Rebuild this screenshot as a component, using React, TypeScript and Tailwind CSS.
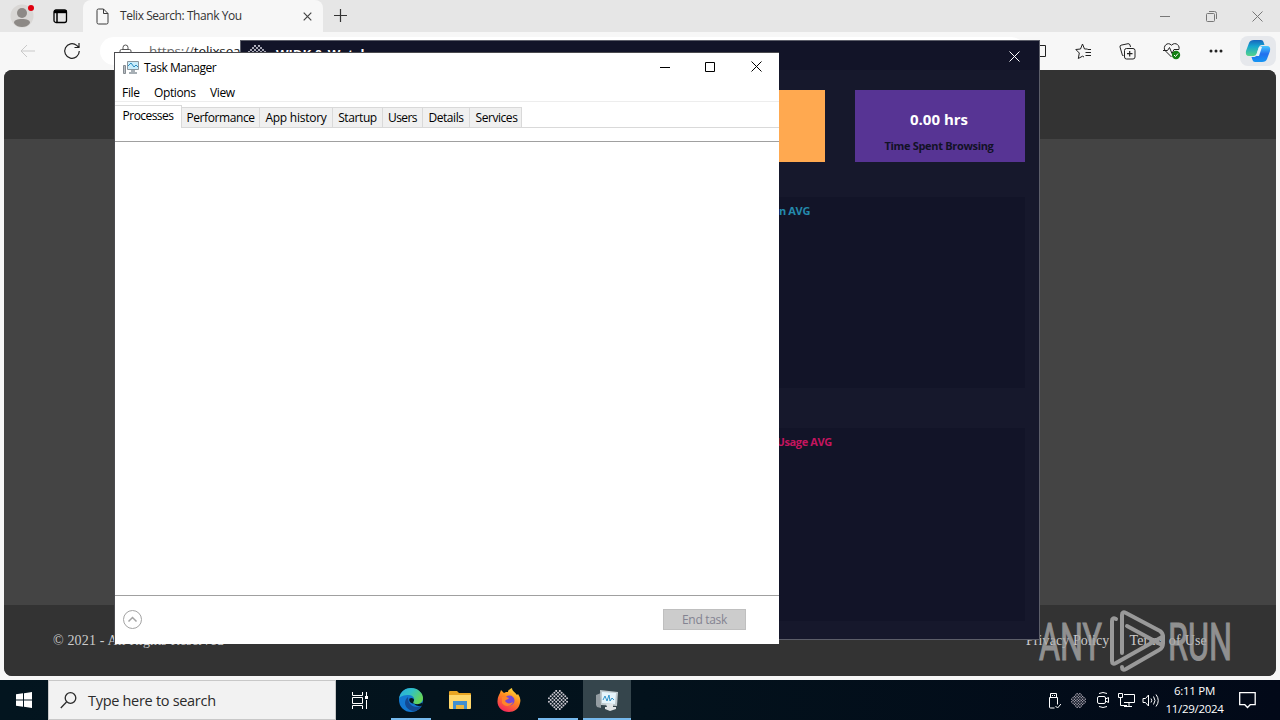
import type { ReactNode } from "react";

const tabs = [
    { label: "Performance", box: "w-[78px]", text: "tracking-[-0.4px]" },
    { label: "App history", box: "w-[73px]", text: "tracking-[-0.25px]" },
    { label: "Startup", box: "w-[50px]", text: "tracking-[-0.4px]" },
    { label: "Users", box: "w-[40px]", text: "tracking-[-0.6px]" },
    { label: "Details", box: "w-[47px]", text: "tracking-[-0.45px]" },
    { label: "Services", box: "w-[52px] pl-0.5", text: "tracking-[-0.45px]" },
];

function Svg({ w, h, className = "", children }: { w: number; h: number; className?: string; children: ReactNode }) {
    return (
        <svg width={w} height={h} viewBox={`0 0 ${w} ${h}`} fill="none" stroke="currentColor" className={`shrink-0 ${className}`}>
            {children}
        </svg>
    );
}

// round badge made of a dot matrix, used by the app window and in the taskbar
function DotBadge({ size, color }: { size: number; color: string }) {
    const dots: ReactNode[] = [];
    for (let y = 0; y < 11; y++) {
        for (let x = 0; x < 11; x++) {
            if ((x + y) % 2 === 0 && Math.hypot(x - 5, y - 5) < 5.6) {
                dots.push(<circle key={`${x}-${y}`} cx={x * 2 + 1} cy={y * 2 + 1} r="1.1" />);
            }
        }
    }
    return (
        <svg width={size} height={size} viewBox="0 0 22 22" fill={color} className="shrink-0">
            {dots}
        </svg>
    );
}

function MonitorIcon() {
    return (
        <Svg w={16} h={15}>
            <path d="M.5 5.500v8h2v-8z" fill="#b9bec3" stroke="#858b91" />
            <path d="M4.500 1.500h11v8h-11z" fill="#c9ecfa" stroke="#8b969e" />
            <path d="M5 6l3-3 3 4 2-2 2 2" stroke="#2c8cc0" />
            <path d="M8 10h4v2h2v2H6v-2h2z" fill="#a7afb5" stroke="none" />
        </Svg>
    );
}

function BrowserTabs() {
    return (
        <div className="flex h-8 bg-[#e6e6e6]">
            <div className="flex w-[83px] items-center pl-2.5">
                <Svg w={26} h={26}>
                    <circle cx="12" cy="13" r="11.500" fill="#d9d7d5" stroke="none" />
                    <circle cx="12" cy="10" r="5" fill="#8d8986" stroke="none" />
                    <path d="M4 20c0-3 3-4 8-4s8 1 8 4c-2 3-5 4-8 4s-6-1-8-4z" fill="#8d8986" stroke="none" />
                    <circle cx="21" cy="5" r="3" fill="#e0000f" stroke="none" />
                </Svg>
                <Svg w={15} h={15} className="ml-[17px] text-black">
                    <rect x="1" y="1" width="12.500" height="12.500" rx="2" strokeWidth="1.300" />
                    <path d="M4 3v10" strokeWidth="1.500" />
                    <path d="M1 2.700h12.500" strokeWidth="3" />
                </Svg>
            </div>
            <div className="flex w-60 items-center rounded-t-lg bg-[#f7f7f7] pl-[13px]">
                <Svg w={13} h={17} className="text-[#3b3b3b]">
                    <path d="M7.500 1h-5Q1 1 1 2.500v12Q1 16 2.500 16h8q1.500 0 1.500-1.500v-9zM7.500 1v4.500H12" />
                </Svg>
                <span className="ml-[11px] w-[183px] text-xs tracking-[-0.44px] text-[#333]">Telix Search: Thank You</span>
                <Svg w={9} h={9} className="text-[#444]">
                    <path d="M.7.7l7.600 7.600M8.300.7L.7 8.300" strokeWidth="1.200" />
                </Svg>
            </div>
            <Svg w={15} h={15} className="mt-2 ml-2.5 text-[#333]">
                <path d="M7.500 1v13M1 7.500h13" strokeWidth="1.200" />
            </Svg>
            <div className="ml-auto flex items-center pr-[17px] text-[#777]">
                <Svg w={10} h={10}>
                    <path d="M0 5.500h10" />
                </Svg>
                <Svg w={11} h={11} className="ml-[36px]">
                    <rect x=".5" y="2.500" width="8" height="8" rx="1" />
                    <path d="M3 .5h5.500q2 0 2 2V8" />
                </Svg>
                <Svg w={11} h={11} className="ml-[35px]">
                    <path d="M.5.5l10 10M10.500.5l-10 10" />
                </Svg>
            </div>
        </div>
    );
}

function BrowserToolbar() {
    return (
        <div className="flex h-[38px] items-center bg-[#f7f7f7]">
            <Svg w={16} h={14} className="ml-5 text-[#c9c9c9]">
                <path d="M7 1L1 7l6 6M1 7h14" />
            </Svg>
            <Svg w={18} h={18} className="ml-[27px] text-[#222]">
                <path d="M16.300 9a7.300 7.300 0 1 1-2.600-5.600L16 5.500M16 1v4.500h-4.500" strokeWidth="1.200" />
            </Svg>
            <div className="ml-[19px] flex h-7 flex-1 items-center rounded-full bg-white pl-[19px]">
                <Svg w={14} h={15} className="text-[#555]">
                    <rect x="1" y="5.500" width="11" height="9" rx="1.500" />
                    <path d="M4 5.500V3.500a2.500 2.500 0 0 1 5 0v2M6.500 9v1.500" />
                </Svg>
                <span className="ml-[16px] text-[13.500px] tracking-[-0.15px] text-[#111]">
                    <span className="text-[#666]">https://</span>telixsearch.com
                </span>
            </div>
            <div className="ml-2 flex items-center text-[#222]">
                <Svg w={14} h={14}>
                    <path d="M1 1.500h11.500v11H1" />
                </Svg>
                <Svg w={17} h={17} className="ml-[28px]">
                    <path d="M12.500 6h-3l-2-5-2 5-4.700.5 3.500 3.500-1 5.500 4.200-2.300 1.500.8M10.500 9.500H16M10.500 12.500H16M12.500 6.500H16" />
                </Svg>
                <Svg w={17} h={17} className="ml-[27px]">
                    <path d="M4.500 12.500h-1L1 4Q.8 2.500 2 2.200L9 .7q1.500-.2 2 1.300l.5 2" />
                    <rect x="5.500" y="5.500" width="10.500" height="10.500" rx="2" />
                    <path d="M10.700 8v5.500M8 10.700h5.500" strokeWidth="1.200" />
                </Svg>
                <Svg w={18} h={18} className="ml-[27px]">
                    <path d="M8.500 15L2 8.500C-.5 4.500 4.500-1 8.500 3.200 12.500-1 18 4 15.500 8M0 8.500h4.500l2-3 2.500 6 2-4h5" />
                    <circle cx="13" cy="13" r="4.200" fill="#148014" stroke="none" />
                    <path d="M11 13l1.500 1.500 2.500-3" stroke="#fff" />
                </Svg>
                <Svg w={14} h={4} className="ml-[28px]">
                    <g fill="#222" stroke="none">
                        <circle cx="2" cy="2" r="1.500" />
                        <circle cx="7" cy="2" r="1.500" />
                        <circle cx="12" cy="2" r="1.500" />
                    </g>
                </Svg>
                <div className="ml-[17px] flex h-[30px] w-9 items-center justify-center rounded-lg bg-[#e6e8ec]">
                    <Svg w={26} h={24}>
                        <defs>
                            <linearGradient id="cpA" x1="0" y1="0" x2="0" y2="1">
                                <stop offset="0" stopColor="#1765bd" />
                                <stop offset=".4" stopColor="#16a5cf" />
                                <stop offset="1" stopColor="#56d48a" />
                            </linearGradient>
                            <linearGradient id="cpB" x1="0" y1="0" x2="0" y2="1">
                                <stop offset="0" stopColor="#45c8ff" />
                                <stop offset=".5" stopColor="#2470ee" />
                                <stop offset="1" stopColor="#1596f3" />
                            </linearGradient>
                        </defs>
                        <path d="M9 1h7q2 0 2.500 2l1 3h-3q-2 0-3 3l-2 6q-1 2-3 2H4q-4 0-3-5l3-8q1-3 5-3z" fill="url(#cpA)" stroke="none" />
                        <path d="M17 23h-7q-2 0-2.500-2l-1-3h3q2 0 3-3l2-6q1-2 3-2H22q4 0 3 5l-3 8q-1 3-5 3z" fill="url(#cpB)" stroke="none" />
                        <path d="M14 8h3l-3 9h-3z" fill="#e8f4fb" stroke="none" />
                    </Svg>
                </div>
                <span className="w-1" />
            </div>
        </div>
    );
}

function BrowserPage() {
    return (
        <div className="mx-1 flex h-[606px] flex-col overflow-hidden rounded-lg bg-[#444]">
            <div className="h-[69px] bg-[#333]" />
            <div className="flex-1" />
            <div className="flex h-[71px] items-center bg-[#333] pr-[69px] pl-[49px] font-['Liberation_Serif',serif] text-sm text-[#ccc]">
                <span className="tracking-[0.15px]">© 2021 - All Rights Reserved</span>
                <span className="ml-auto tracking-[0.1px]">Privacy Policy</span>
                <span className="ml-5 tracking-[0.2px]">Terms of Use</span>
            </div>
        </div>
    );
}

function Watermark() {
    return (
        <svg width="200" height="64" viewBox="0 0 200 64" fill="none" className="absolute top-[609px] left-[1037px]">
            <g fill="#a8a8a8" stroke="#a8a8a8" strokeWidth="1.200" opacity=".8" fontFamily="Roboto, sans-serif" fontWeight="400" fontSize="52">
                <text x="2" y="50.5" textLength="63" lengthAdjust="spacingAndGlyphs">ANY</text>
                <text x="131" y="50.5" textLength="64" lengthAdjust="spacingAndGlyphs">RUN</text>
            </g>
            <g stroke="#999" strokeWidth="4" strokeLinejoin="round" strokeLinecap="round">
                <path d="M79 10q-4-2-4 2v40q0 4 4 2l46-26" />
                <path d="M85 44V6q0-4 4-2l34 18q3 2 3 6" />
                <path d="M90 17l35 19" />
                <path d="M85 58q0 4 4 2l33-19q4-2 4-7v-6" />
            </g>
        </svg>
    );
}

function StatsWindow() {
    return (
        <div className="absolute top-10 left-60 flex h-[600px] w-[800px] flex-col border border-[#5c5e69] bg-[#16182c] text-[11px] font-bold">
            <div className="flex h-[29px] items-center bg-[#121428] pr-[19px] pl-[5px] text-white">
                <DotBadge size={22} color="#c8c8d4" />
                <span className="mb-1 ml-2 text-[13px] leading-4">WIDK & Watch</span>
                <Svg w={11} h={11} className="mt-px ml-auto">
                    <path d="M.5.500l10 10M10.500.500l-10 10" />
                </Svg>
            </div>
            <div className="mt-5 flex justify-end gap-[30px] pr-3.5">
                <div className="h-[72px] w-[170px] bg-[#ffa950]" />
                <div className="flex h-[72px] w-[170px] flex-col items-center bg-[#573494] pt-[18px]">
                    <span className="mr-0.5 text-[15px] leading-[22px] text-white">0.00 hrs</span>
                    <span className="mt-2 mr-0.5 text-[11px] leading-4 tracking-[-0.32px] text-[#121226]">Time Spent Browsing</span>
                </div>
            </div>
            <div className="mx-3.5 mt-[35px] flex h-[191px] justify-end bg-[#121428] pt-1.5 pr-[215px] text-[#2489ad]">
                <span className="leading-4 tracking-[-0.35px]">Consumption AVG</span>
            </div>
            <div className="mx-3.5 mt-10 flex h-[193px] justify-end bg-[#121428] pt-1.5 pr-[193px] text-[#c5155f]">
                <span className="leading-4 tracking-[-0.35px]">Data Usage AVG</span>
            </div>
        </div>
    );
}

function TaskManager() {
    return (
        <div className="absolute top-[52px] left-[114px] flex h-[592px] w-[665px] flex-col border-t border-l border-[#4b4b4f] bg-white text-xs text-black">
            <div className="flex h-7 items-center pl-2">
                <MonitorIcon />
                <span className="mt-0.5 ml-[5px] tracking-[-0.5px]">Task Manager</span>
                <div className="ml-auto flex items-center pr-[17px]">
                    <Svg w={10} h={10}>
                        <path d="M0 5.500h10" />
                    </Svg>
                    <Svg w={10} h={10} className="ml-[35px]">
                        <path d="M.5.500h9v9h-9z" />
                    </Svg>
                    <Svg w={11} h={11} className="-mt-px ml-[36px]">
                        <path d="M.5.500l10 10M10.500.500l-10 10" />
                    </Svg>
                </div>
            </div>
            <div className="flex h-[21px] items-center border-b border-[#ededed] pt-1 pl-[7px]">
                <span className="w-8 tracking-[-0.3px]">File</span>
                <span className="w-14 tracking-[-0.4px]">Options</span>
                <span className="tracking-[-0.4px]">View</span>
            </div>
            <div className="flex h-[26px] items-end border-b border-[#d9d9d9]">
                <div className="-mb-px flex h-[23px] w-[67px] items-center justify-center border-t border-r border-[#d9d9d9] bg-white pb-0.5">
                    <span className="tracking-[-0.55px]">Processes</span>
                </div>
                {tabs.map((tab) => (
                    <div key={tab.label} className={`flex h-5 items-center justify-center border-t border-r border-[#d9d9d9] bg-[#f0f0f0] whitespace-nowrap ${tab.box}`}>
                        <span className={tab.text}>{tab.label}</span>
                    </div>
                ))}
            </div>
            <div className="h-[14px] border-b border-[#a0a0a0]" />
            <div className="flex-1" />
            <div className="flex h-[49px] items-center border-t border-[#a0a0a0] pr-[33px] pl-2">
                <Svg w={20} h={20} className="text-[#a3a3a3]">
                    <circle cx="9.500" cy="9.500" r="9" />
                    <path d="M5.500 11.500l4-4 4 4" strokeWidth="1.500" />
                </Svg>
                <div className="mb-px ml-auto flex h-[21px] w-[83px] items-center justify-center border border-[#bfbfbf] bg-[#ccc] tracking-[-0.3px] text-[#838391]">End task</div>
            </div>
        </div>
    );
}

function EdgeIcon() {
    return (
        <Svg w={26} h={26}>
            <defs>
                <linearGradient id="edA" x1="0" y1="0" x2="1" y2=".5">
                    <stop offset="0" stopColor="#2aa9e0" />
                    <stop offset=".5" stopColor="#30c1c6" />
                    <stop offset="1" stopColor="#66d556" />
                </linearGradient>
            </defs>
            <circle cx="13" cy="13" r="12" fill="#1378d1" stroke="none" />
            <path d="M1 12C2 4 8 1 13 1c7 0 12 5 12 10 0 4-3 6-6 6-2 0-5-.5-4-2 3-3 0-7-4-7-5 0-9 1-10 4z" fill="url(#edA)" stroke="none" />
            <path d="M10 10c-6 5-2 13 5 14 4 0 7-2 9-5-8 3-14-1-14-9z" fill="#134a93" stroke="none" />
            <path d="M11.500 11.500c2-1.500 5 0 4.500 2-.4 1.300-1.500 2 0 3-3 0-5.500-2-4.500-5z" fill="#04161f" stroke="none" />
            <path d="M15.500 16.500q5 2 9-1v3q-5 2-9-2z" fill="#04161f" stroke="none" />
        </Svg>
    );
}

function FolderIcon() {
    return (
        <Svg w={22} h={20}>
            <g stroke="none">
                <path d="M0 2q0-1 1-1h7l2 2h11q1 0 1 1v3H0z" fill="#e9a522" />
                <path d="M0 5h22v13q0 1-1 1H1q-1 0-1-1z" fill="#ffd76b" />
                <path d="M4 11h14v8h-3v-4H7v4H4z" fill="#3f8fd0" />
                <path d="M7 15h8v4H7z" fill="#e9b640" />
            </g>
        </Svg>
    );
}

function FirefoxIcon() {
    return (
        <Svg w={24} h={24}>
            <defs>
                <linearGradient id="ff" x1=".8" y1="0" x2=".3" y2="1">
                    <stop offset="0" stopColor="#ffe23d" />
                    <stop offset=".45" stopColor="#ff8b1f" />
                    <stop offset="1" stopColor="#f5245c" />
                </linearGradient>
            </defs>
            <g stroke="none">
                <path d="M3 5l1-3 3 3 2-1 2 0c0-2 2-3 4-4 0 3 3 4 5 7l1-1c2 3 3 6 2 9-1 6-6 9-11 9C5 24 0 19 .5 13 .7 9 2 7 3 5z" fill="url(#ff)" />
                <circle cx="12.500" cy="12.500" r="5" fill="#7548d6" />
                <path d="M5 9c3-1 4 0 7 1-1 2-3 1-4 3 2 3 5 3 8 1-1 4-8 6-11 1z" fill="#ff852a" />
            </g>
        </Svg>
    );
}

function TaskbarMonitorIcon() {
    return (
        <Svg w={24} h={24}>
            <g stroke="none">
                <path d="M1 7l5-2v15l-4-1-1-2z" fill="#949da2" />
                <path d="M5 2l18 2-1 14-16-1z" fill="#bfc9cd" />
                <path d="M7 4l14 1-1 11-13-1z" fill="#e6f5fc" />
                <path d="M11 16h7v3h3v2l-6 2-5-2v-2h2z" fill="#dfe3e5" />
            </g>
            <path d="M8 12l2-4 2 5 2-6 1 6 2-3 2 2" stroke="#3194cb" />
        </Svg>
    );
}

function Taskbar() {
    return (
        <div className="flex h-10 bg-gradient-to-r from-[#03151f] via-[#03121c] to-[#020918] text-white">
            <div className="flex w-12 items-center justify-center">
                <Svg w={16} h={16}>
                    <path d="M0 2.300L7 1.300v6.200H0zM8 1.200L16 0v7.500H8zM0 8.500h7v6.200l-7-1zM8 8.500h8V16l-8-1.200z" fill="#fff" stroke="none" />
                </Svg>
            </div>
            <div className="flex w-72 items-center border border-[#c8c8c8] bg-[#f2f2f2] pl-[11px] text-[#2b2b2b]">
                <Svg w={17} h={17}>
                    <circle cx="10.500" cy="6" r="5.300" strokeWidth="1.300" />
                    <path d="M6.500 10L.8 16" strokeWidth="1.300" />
                </Svg>
                <span className="mt-0.5 ml-[11px] text-[14.500px] tracking-[-0.3px]">Type here to search</span>
            </div>
            <div className="flex w-12 items-center justify-center">
                <Svg w={17} h={17}>
                    <path d="M.500 0v3.500h10V0M.500 5.500h10v6H.500zM.500 17v-3.500h10V17M14.500 0v4M14.500 8v9" />
                    <path d="M13 4h3v3h-3z" fill="#fff" stroke="none" />
                </Svg>
            </div>
            <div className="ml-[7px] flex w-10 items-center justify-center border-b-2 border-[#76b9ed] pt-0.5">
                <EdgeIcon />
            </div>
            <div className="flex w-[58px] items-center justify-center">
                <FolderIcon />
            </div>
            <div className="flex w-10 items-center justify-center">
                <FirefoxIcon />
            </div>
            <div className="ml-[9px] flex w-10 items-center justify-center border-b-2 border-[#76b9ed] pt-0.5">
                <DotBadge size={20} color="#cfcbd3" />
            </div>
            <div className="ml-[5px] flex w-12 items-center justify-center border-b-2 border-[#76b9ed] bg-[#35454c] pt-0.5">
                <TaskbarMonitorIcon />
            </div>
            <div className="ml-auto flex items-center">
                <Svg w={14} h={17}>
                    <path d="M3.500 5V1.500h6V5M2.500 5.500h8v7M2.500 5.500V15q0 1 1 1h4M8.500 14l2 2 3.500-4M5.500 3v1M7.500 3v1" />
                </Svg>
                <span className="ml-2.5 flex">
                    <DotBadge size={15} color="#aaa4b0" />
                </span>
                <Svg w={14} h={16} className="ml-2.5">
                    <rect x="1.500" y="4.500" width="8" height="7" rx="1.500" />
                    <path d="M9.500 7l3-1.500v5l-3-1.500M3 1.500q4-2 8 0M3 14.500q4 2 8 0" />
                </Svg>
                <Svg w={18} h={15} className="ml-2">
                    <path d="M6 1.500h10.500v8H6M.500.500h4v4h-4zM2.500 5v7.500H9M6 13.500h8M11 10v3" />
                </Svg>
                <Svg w={18} h={15} className="ml-1.5">
                    <path d="M1 5.500h2.500l3-3.500v11l-3-3.500H1zM9 5.500q1.500 2 0 4M11.500 3.500q3 4 0 8M14 1.500q4.500 6 0 12" />
                </Svg>
                <div className="ml-[5px] flex w-[59px] flex-col items-center text-[11.500px] leading-[18px] tracking-[-0.3px] whitespace-nowrap">
                    <span>6:11 PM</span>
                    <span>11/29/2024</span>
                </div>
                <Svg w={17} h={17} className="mr-6 ml-[15px]">
                    <path d="M.700.700h15.500v12h-5L8.500 15.500l-2.700-2.800H.7z" strokeWidth="1.300" />
                </Svg>
            </div>
        </div>
    );
}

export default function App() {
    return (
        <div className="relative h-[720px] w-[1280px] overflow-hidden bg-[#f7f7f7] font-['Open_Sans','Noto_Sans',sans-serif]">
            <div className="h-[680px]">
                <BrowserTabs />
                <BrowserToolbar />
                <BrowserPage />
            </div>
            <Taskbar />
            <StatsWindow />
            <TaskManager />
            <Watermark />
        </div>
    );
}
